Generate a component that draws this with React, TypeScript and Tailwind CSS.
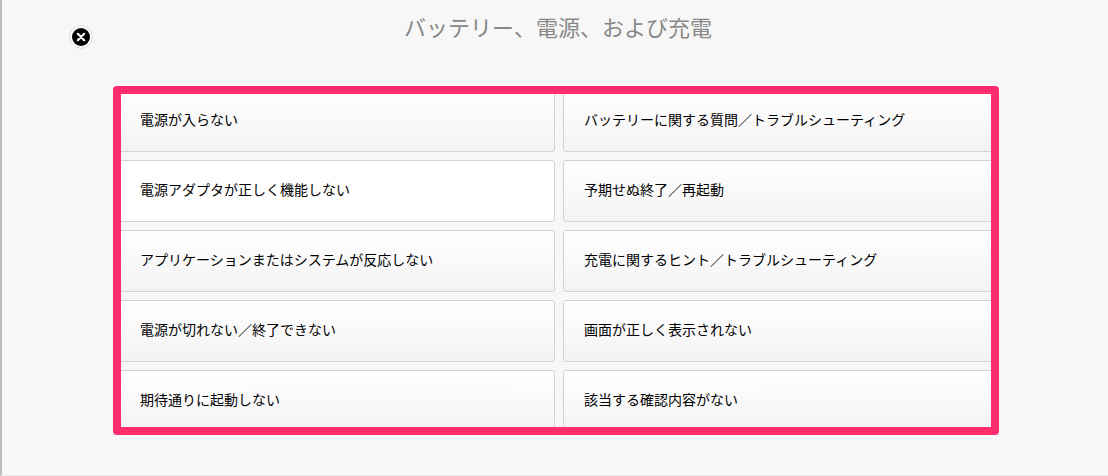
import React from 'react';
import clsx from 'clsx';

type Topic = {
    label: string;
    active?: boolean;
};

const topics: Topic[] = [
    { label: '電源が入らない' },
    { label: 'バッテリーに関する質問／トラブルシューティング' },
    { label: '電源アダプタが正しく機能しない', active: true },
    { label: '予期せぬ終了／再起動' },
    { label: 'アプリケーションまたはシステムが反応しない' },
    { label: '充電に関するヒント／トラブルシューティング' },
    { label: '電源が切れない／終了できない' },
    { label: '画面が正しく表示されない' },
    { label: '期待通りに起動しない' },
    { label: '該当する確認内容がない' },
];

const CloseIcon = () => (
    <svg viewBox="0 0 24 24" className="h-6 w-6" aria-hidden="true">
        <circle cx="12" cy="12" r="11.3" fill="#fff" stroke="#d9d9d9" strokeWidth="1" />
        <circle cx="12" cy="12" r="9" fill="#000" />
        <path d="M8.8 8.8l6.4 6.4M15.2 8.8l-6.4 6.4" stroke="#fff" strokeWidth="2.2" strokeLinecap="round" />
    </svg>
);

const TopicButton = ({ label, active = false }: Topic) => (
    <button
        type="button"
        className={clsx(
            'h-[62px] rounded-[3px] border border-[#d2d2d2] px-5 pb-1 text-left text-sm text-black',
            active ? 'bg-white' : 'bg-linear-to-b from-white to-[#f3f3f3] hover:bg-none hover:bg-white'
        )}
    >
        {label}
    </button>
);

const App = () => {
    return (
        <main className="min-h-screen border-b border-l-2 border-b-[#ebebeb] border-l-[#bdbdbd] bg-[#f7f7f7] pb-10 pl-[2px] font-['Noto_Sans_CJK_JP',sans-serif]">
            {/* Title bar */}
            <header className="mx-auto grid h-[86px] max-w-[974px] grid-cols-[1fr_auto_1fr] items-start">
                <button type="button" aria-label="閉じる" className="mt-[25px] h-6 w-6 rounded-full">
                    <CloseIcon />
                </button>
                <h1 className="pl-1 text-[22px] leading-[52px] text-[#888888]">バッテリー、電源、および充電</h1>
            </header>

            {/* Topics, cropped by the highlight frame */}
            <section className="mx-auto max-w-[886px] overflow-hidden rounded-[4px] border-8 border-[#ff2d6b]">
                <div className="-mt-1 -mr-2 -mb-[5px] -ml-[2px] grid grid-cols-2 gap-2">
                    {topics.map((topic) => (
                        <TopicButton key={topic.label} {...topic} />
                    ))}
                </div>
            </section>
        </main>
    );
};

export default App;
